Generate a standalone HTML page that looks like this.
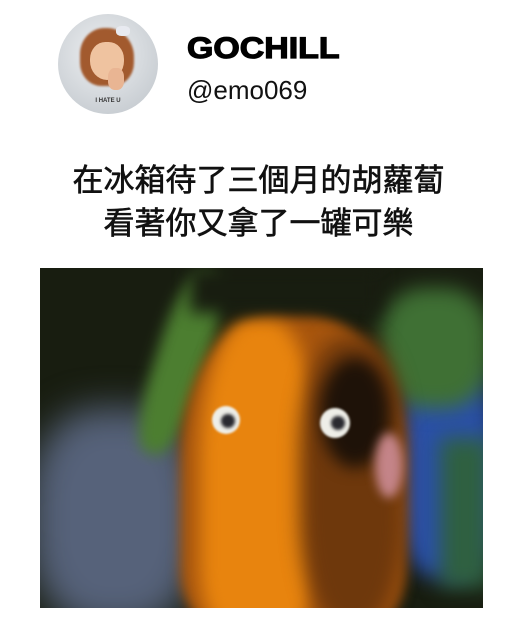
<!DOCTYPE html>
<html><head><meta charset="utf-8">
<style>
html,body{margin:0;padding:0;background:#fff;}
body{width:517px;height:640px;position:relative;overflow:hidden;font-family:"Liberation Sans","Noto Sans CJK TC",sans-serif;}
.av{position:absolute;left:58px;top:14px;width:100px;height:100px;border-radius:50%;background:radial-gradient(circle at 45% 40%,#eef0f2,#c9ced3 75%,#b8bec4);overflow:hidden;}
.hair{position:absolute;left:22px;top:14px;width:54px;height:58px;border-radius:45% 50% 40% 40%;background:#a25a2e;filter:blur(1px);}
.face{position:absolute;left:32px;top:28px;width:34px;height:38px;border-radius:45% 45% 50% 50%;background:#efc3a0;}
.hand{position:absolute;left:50px;top:54px;width:16px;height:22px;border-radius:40%;background:#e9b593;}
.bow{position:absolute;left:58px;top:12px;width:14px;height:10px;background:#e8eaf0;border-radius:40%;}
.avt{position:absolute;left:0;width:100px;top:84px;text-align:center;font-size:6px;font-weight:bold;color:#333;}
.name{position:absolute;left:187px;top:32px;font-size:30px;font-weight:900;color:#000;-webkit-text-stroke:1.2px #000;transform:scaleX(1.13);transform-origin:left;}
.handle{position:absolute;left:187px;top:75px;font-size:26px;color:#111;}
.cap{position:absolute;left:0;width:517px;text-align:center;font-size:31px;color:#111;line-height:44px;-webkit-text-stroke:0.6px #111;}
.img{position:absolute;left:40px;top:268px;width:443px;height:340px;background:#181d10;overflow:hidden;}
.img div{position:absolute;}
</style></head><body>
<div class="av"><div class="hair"></div><div class="face"></div><div class="hand"></div><div class="bow"></div><div class="avt">I HATE U</div></div>
<div class="name">GOCHILL</div>
<div class="handle">@emo069</div>
<div class="cap" style="top:159px">在冰箱待了三個月的胡蘿蔔</div>
<div class="cap" style="top:202px">看著你又拿了一罐可樂</div>
<div class="img">
 <div style="left:-10px;top:140px;width:170px;height:220px;background:#56627a;filter:blur(18px);border-radius:40%"></div>
 <div style="left:355px;top:90px;width:100px;height:220px;background:#2a50a8;filter:blur(10px);border-radius:40%"></div>
 <div style="left:340px;top:20px;width:110px;height:120px;background:#3f7034;filter:blur(10px);border-radius:40%"></div>
 <div style="left:400px;top:170px;width:50px;height:150px;background:#2f6040;filter:blur(10px)"></div>
 <div style="left:115px;top:0px;width:50px;height:190px;background:#4c7e30;filter:blur(7px);border-radius:40%;transform:rotate(18deg)"></div>
 <div style="left:140px;top:45px;width:225px;height:320px;background:#a8560e;filter:blur(6px);border-radius:45% 45% 20% 20%"></div>
 <div style="left:160px;top:50px;width:115px;height:310px;background:#e8840e;filter:blur(9px);border-radius:45% 40% 20% 20%"></div>
 <div style="left:260px;top:70px;width:105px;height:290px;background:#6e380c;filter:blur(10px);border-radius:40%"></div>
 <div style="left:280px;top:90px;width:70px;height:110px;background:#1e1208;filter:blur(8px);border-radius:50%"></div>
 <div style="left:335px;top:165px;width:28px;height:65px;background:#c48488;filter:blur(5px);border-radius:50%"></div>
 <div style="left:150px;top:0px;width:190px;height:45px;background:#181d10;filter:blur(8px)"></div>
 <div style="left:172px;top:138px;width:28px;height:28px;background:#eeeee8;border-radius:50%;filter:blur(1px)"></div>
 <div style="left:181px;top:146px;width:14px;height:14px;background:#2a2a30;border-radius:50%;filter:blur(1.5px)"></div>
 <div style="left:280px;top:140px;width:30px;height:30px;background:#eeeee8;border-radius:50%;filter:blur(1px)"></div>
 <div style="left:291px;top:148px;width:14px;height:14px;background:#2a2a30;border-radius:50%;filter:blur(1.5px)"></div>
</div>
</body></html>
